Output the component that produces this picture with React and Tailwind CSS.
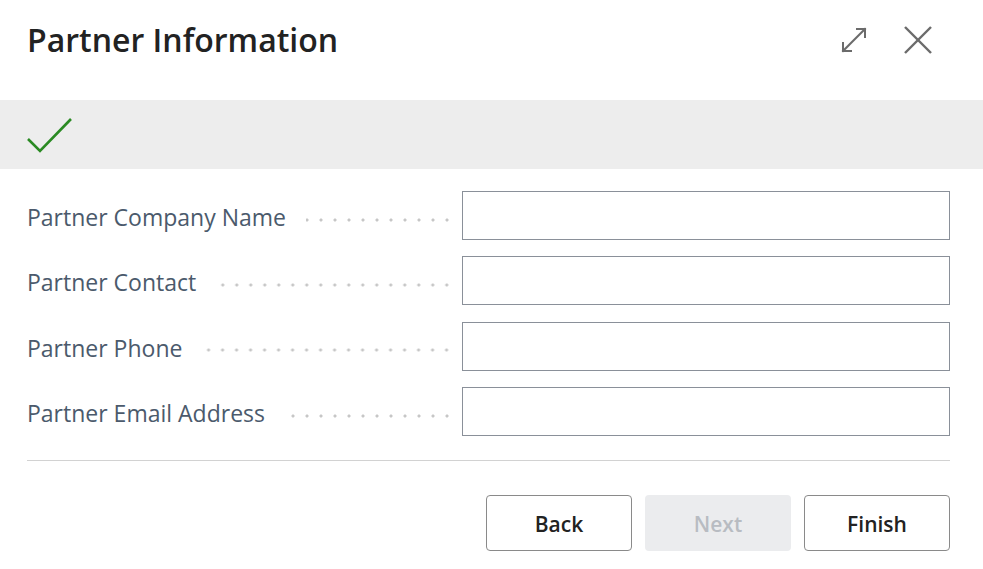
import React from 'react';

const fields = [
  'Partner Company Name',
  'Partner Contact',
  'Partner Phone',
  'Partner Email Address',
];

function ExpandIcon() {
  return (
    <svg width="28" height="28" viewBox="0 0 28 28" fill="none" stroke="#6b6b6b" strokeWidth="2" strokeLinecap="square">
      <path d="M3 25 L25 3" />
      <path d="M17 3 H25 V11" />
      <path d="M3 17 V25 H11" />
    </svg>
  );
}

function CloseIcon() {
  return (
    <svg width="30" height="30" viewBox="0 0 30 30" fill="none" stroke="#6b6b6b" strokeWidth="2.4">
      <path d="M2 2 L28 28" />
      <path d="M28 2 L2 28" />
    </svg>
  );
}

function FieldRow({ label }) {
  return (
    <div className="flex items-center h-[49px]">
      <span className="text-[23px] pt-[3px] text-[#4b5a6c] whitespace-nowrap pr-5">{label}</span>
      <div className="flex-1 h-[6px] mt-[8px] mr-[8px] bg-[radial-gradient(circle,#c6c6c6_1.3px,transparent_1.8px)] bg-[length:14px_6px] bg-repeat-x bg-right" />
      <input className="w-[488px] h-[49px] border border-[#8a9099] bg-white outline-none px-3 text-[20px]" />
    </div>
  );
}

export default function App() {
  return (
    <div className="w-[983px] h-[569px] bg-white font-['Open_Sans',sans-serif] text-[#212121] overflow-hidden">
      <header className="flex items-center justify-between h-[100px] pl-[27px] pr-[50px] pb-[20px]">
        <h1 className="text-[32px] font-semibold leading-none text-[#222]">Partner Information</h1>
        <div className="flex items-center gap-[35px]">
          <ExpandIcon />
          <CloseIcon />
        </div>
      </header>

      <div className="h-[69px] bg-[#ededed] flex items-center pl-[27px]">
        <svg width="46" height="36" viewBox="0 0 46 36" fill="none" stroke="#2a8a23" strokeWidth="2.6">
          <path d="M1 22 L13 34 L44 2" />
        </svg>
      </div>

      <div className="px-[27px] pt-[22px] pr-[33px]">
        <div className="flex flex-col gap-[16.4px]">
          {fields.map((f) => (
            <FieldRow key={f} label={f} />
          ))}
        </div>
        <div className="border-t border-[#d2d2d2] mt-[24px]" />
        <div className="flex justify-end gap-[13px] mt-[34px]">
          <button className="w-[146px] h-[56px] pt-[3px] rounded-[4px] border border-[#8a8a8a] bg-white text-[21px] font-semibold text-[#222]">Back</button>
          <button className="w-[146px] h-[56px] pt-[3px] rounded-[4px] bg-[#ebecee] text-[21px] font-semibold text-[#b8bcc2]">Next</button>
          <button className="w-[146px] h-[56px] pt-[3px] rounded-[4px] border border-[#8a8a8a] bg-white text-[21px] font-semibold text-[#222]">Finish</button>
        </div>
      </div>
    </div>
  );
}
